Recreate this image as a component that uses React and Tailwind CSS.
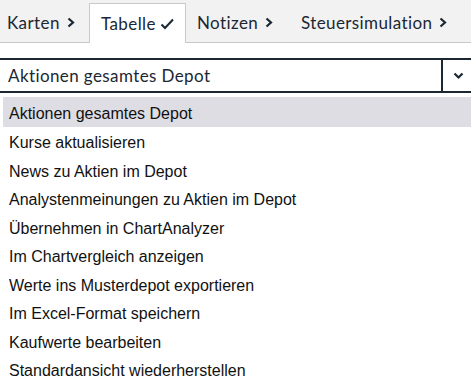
import React from "react";

const Chev = () => (
  <svg width="8" height="11" viewBox="0 0 8 11" className="ml-[7px]" fill="none">
    <path d="M1.5 1.5 L6 5.5 L1.5 9.5" stroke="#1b2733" strokeWidth="2.2" />
  </svg>
);
const Check = () => (
  <svg width="15" height="12" viewBox="0 0 15 12" className="ml-[4px]" fill="none">
    <path d="M1.5 6.5 L5 10 L13 1.5" stroke="#1b2733" strokeWidth="2" />
  </svg>
);

const items = [
  "Aktionen gesamtes Depot",
  "Kurse aktualisieren",
  "News zu Aktien im Depot",
  "Analystenmeinungen zu Aktien im Depot",
  "Übernehmen in ChartAnalyzer",
  "Im Chartvergleich anzeigen",
  "Werte ins Musterdepot exportieren",
  "Im Excel-Format speichern",
  "Kaufwerte bearbeiten",
  "Standardansicht wiederherstellen",
];

export default function App() {
  return (
    <div className="w-[471px] h-[389px] bg-white overflow-hidden text-[#1b2733]">
      <div className="h-[43px] bg-[#f2f2f2] border-b border-[#c9c9c9] flex items-end font-['Lato',sans-serif] text-[17px] tracking-[0.4px]">
        <div className="w-[89px] shrink-0 h-[39px] flex items-center pl-[7px]">
          Karten<Chev />
        </div>
        <div className="w-[97px] shrink-0 h-[40px] mb-[-1px] bg-white border border-b-0 border-[#c9c9c9] flex items-center pl-[11px]">
          Tabelle<Check />
        </div>
        <div className="w-[115px] shrink-0 h-[39px] flex items-center pl-[11px]">
          Notizen<Chev />
        </div>
        <div className="h-[39px] flex items-center">
          Steuersimulation<Chev />
        </div>
      </div>
      <div className="mt-[15px] h-[35px] border-t-2 border-b-2 border-[#1b2733] flex font-['Lato',sans-serif] text-[17px] tracking-[0.4px]">
        <div className="flex-1 flex items-center pl-[8px]">Aktionen gesamtes Depot</div>
        <div className="w-[30px] border-l-2 border-[#1b2733] flex items-center justify-center">
          <svg width="11" height="8" viewBox="0 0 11 8" fill="none" className="ml-[2px]">
            <path d="M1.5 1.5 L5.5 5.5 L9.5 1.5" stroke="#1b2733" strokeWidth="2.2" />
          </svg>
        </div>
      </div>
      <div className="mt-[4px] ml-[3px] font-['Liberation_Sans',Arial,sans-serif] text-[16px] text-[#111]">
        {items.map((t, i) => (
          <div
            key={t}
            className={
              i === 0
                ? "h-[30px] flex items-center pl-[6px] pt-[4px] bg-[#dedde3]"
                : "h-[28.5px] flex items-center pl-[6px] pt-[4px]"
            }
          >
            {t}
          </div>
        ))}
      </div>
    </div>
  );
}
